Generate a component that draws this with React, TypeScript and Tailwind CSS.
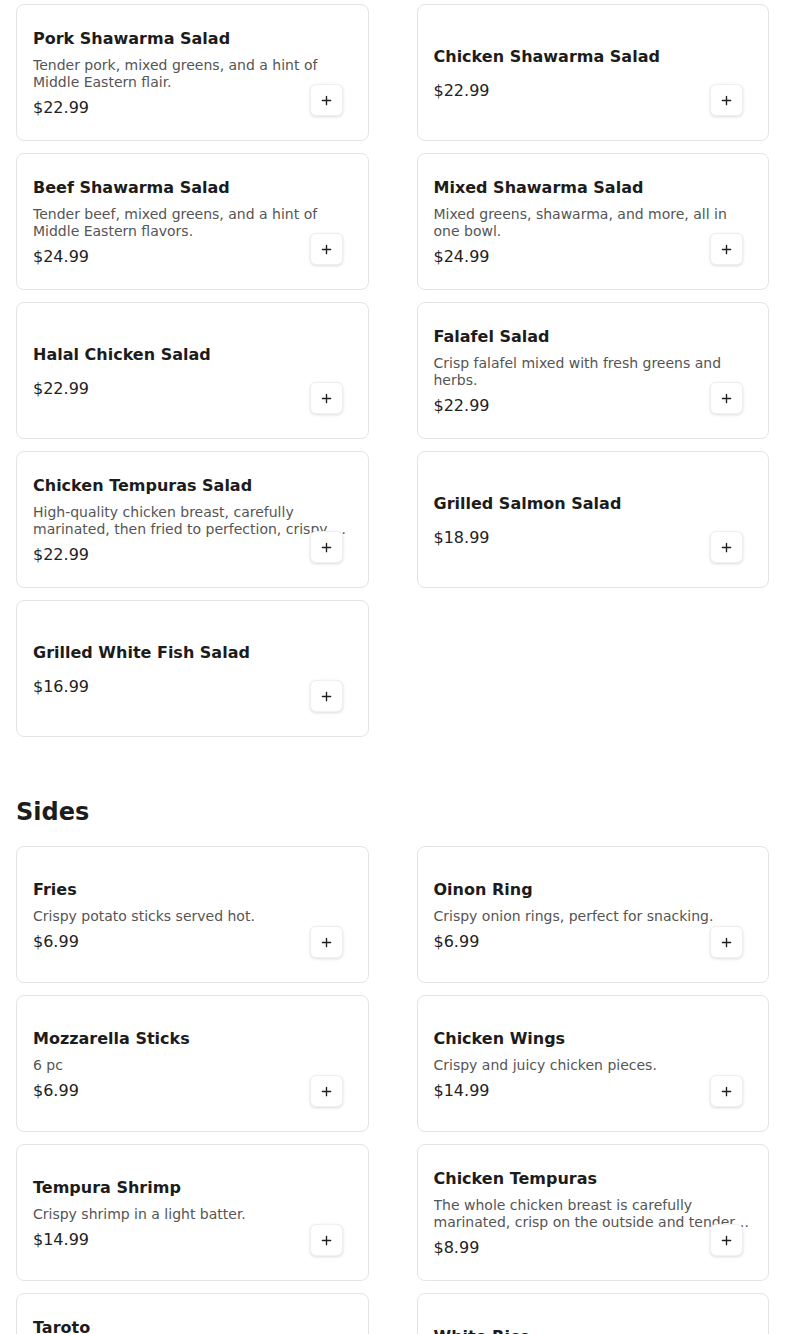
import React from 'react';

type Item = {
  name: string;
  description?: string;
  price: string;
};

const salads: Item[] = [
  { name: 'Pork Shawarma Salad', description: 'Tender pork, mixed greens, and a hint of Middle Eastern flair.', price: '$22.99' },
  { name: 'Chicken Shawarma Salad', price: '$22.99' },
  { name: 'Beef Shawarma Salad', description: 'Tender beef, mixed greens, and a hint of Middle Eastern flavors.', price: '$24.99' },
  { name: 'Mixed Shawarma Salad', description: 'Mixed greens, shawarma, and more, all in one bowl.', price: '$24.99' },
  { name: 'Halal Chicken Salad', price: '$22.99' },
  { name: 'Falafel Salad', description: 'Crisp falafel mixed with fresh greens and herbs.', price: '$22.99' },
  {
    name: 'Chicken Tempuras Salad',
    description: 'High-quality chicken breast, carefully marinated, then fried to perfection, crispy on the outside and juicy inside.',
    price: '$22.99',
  },
  { name: 'Grilled Salmon Salad', price: '$18.99' },
  { name: 'Grilled White Fish Salad', price: '$16.99' },
];

const sides: Item[] = [
  { name: 'Fries', description: 'Crispy potato sticks served hot.', price: '$6.99' },
  { name: 'Oinon Ring', description: 'Crispy onion rings, perfect for snacking.', price: '$6.99' },
  { name: 'Mozzarella Sticks', description: '6 pc', price: '$6.99' },
  { name: 'Chicken Wings', description: 'Crispy and juicy chicken pieces.', price: '$14.99' },
  { name: 'Tempura Shrimp', description: 'Crispy shrimp in a light batter.', price: '$14.99' },
  {
    name: 'Chicken Tempuras',
    description: 'The whole chicken breast is carefully marinated, crisp on the outside and tender on the inside.',
    price: '$8.99',
  },
  { name: 'Taroto', description: 'Crispy taro bites, golden on the outside and soft on the inside.', price: '$6.99' },
  { name: 'White Rice', description: 'Steamed white rice.', price: '$3.99' },
];

const PlusIcon = () => (
  <svg width="11" height="11" viewBox="0 0 12 12" fill="none">
    <path d="M6 1.5v9M1.5 6h9" stroke="#1f1f1f" strokeWidth="1.5" strokeLinecap="round" />
  </svg>
);

const MenuCard: React.FC<{ item: Item }> = ({ item }) => (
  <div className="relative h-[137px] bg-white border border-[#e4e4e4] rounded-lg px-4 pt-[2px] flex items-center">
    <div className="w-full flex flex-col gap-[5px]">
      <h3 className="text-base leading-6 font-bold text-[#1c1c1c]">{item.name}</h3>
      {item.description ? (
        <p className="pt-px text-[14px] leading-[17px] text-[#555555] line-clamp-2">{item.description}</p>
      ) : (
        <p className="h-0" />
      )}
      <p className="text-base leading-6 text-[#222222]">{item.price}</p>
    </div>
    <button className="absolute bottom-6 right-[25px] w-[33px] h-8 flex items-center justify-center bg-white rounded-md border border-[#efefef] shadow-[0_1px_3px_rgba(0,0,0,0.14)]">
      <PlusIcon />
    </button>
  </div>
);

const App: React.FC = () => {
  return (
    <div className="min-h-screen bg-white px-4 pt-1 pb-10" style={{ fontFamily: '"DejaVu Sans", Verdana, sans-serif' }}>
      {/* Salads */}
      <section>
        <div className="grid grid-cols-2 gap-x-12 gap-y-3">
          {salads.map((item) => (
            <MenuCard key={item.name} item={item} />
          ))}
        </div>
      </section>

      {/* Sides */}
      <section className="mt-[59px]">
        <h2 className="text-2xl leading-8 font-bold text-[#1c1c1c] mb-[18px]">Sides</h2>
        <div className="grid grid-cols-2 gap-x-12 gap-y-3">
          {sides.map((item) => (
            <MenuCard key={item.name} item={item} />
          ))}
        </div>
      </section>
    </div>
  );
};

export default App;
